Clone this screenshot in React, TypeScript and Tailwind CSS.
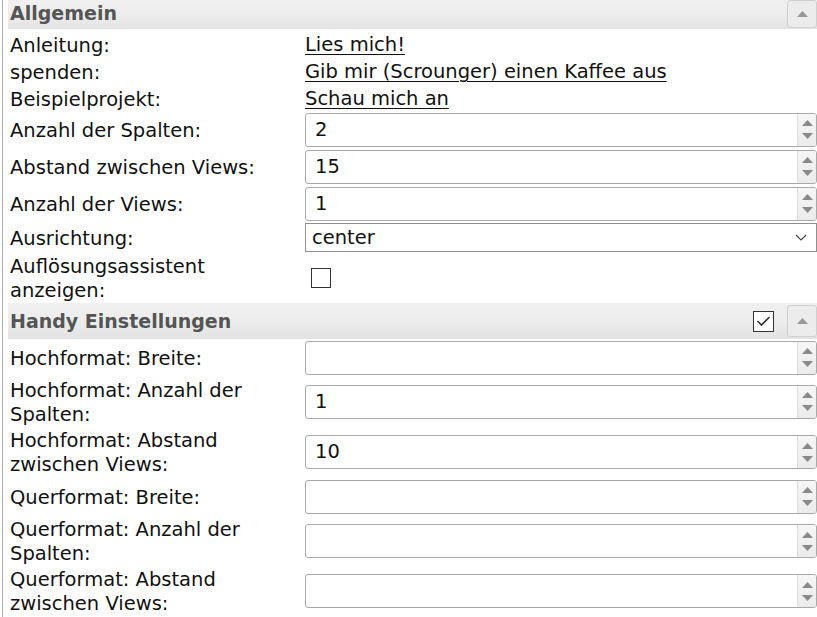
import React from "react";

const font = { fontFamily: '"DejaVu Sans", Verdana, sans-serif' };

function Header({ title, checked, h }: { title: string; checked?: boolean; h: string }) {
  return (
    <div className={`flex items-center bg-[linear-gradient(#f0f0f0_0%,#ededed_45%,#e3e3e3_100%)] pl-[2px] ${h}`}>
      <span className={`flex-1 text-[19px] font-bold text-[#555] ${checked ? "" : "pb-[3px]"}`}>{title}</span>
      {checked && (
        <span className="mr-[13px] flex h-[21px] w-[21px] items-center justify-center border border-[#333] bg-white">
          <svg width="15" height="12" viewBox="0 0 15 12">
            <path d="M1.5 6 L5.5 10 L13.5 2" fill="none" stroke="#333" strokeWidth="1.6" />
          </svg>
        </span>
      )}
      <span
        className={`flex w-[30px] items-center justify-center self-start rounded-[3px] border border-[#d0d0d0] bg-[#ececec] ${
          checked ? "mt-[2px] h-[32px]" : "h-[28px]"
        }`}
      >
        <svg width="11" height="6" viewBox="0 0 11 6">
          <path d="M0 6 L5.5 0 L11 6 Z" fill="#999" />
        </svg>
      </span>
    </div>
  );
}

function Spin({ value }: { value?: string }) {
  return (
    <div className="flex h-[34px] w-full overflow-hidden rounded-[3px] border border-[#a9a9a9] bg-white">
      <div className="flex flex-1 items-center pl-[9px] text-[19.5px] text-[#111]">{value}</div>
      <div className="flex w-[19px] flex-col items-center justify-center gap-[7px] border-l border-[#ddd] bg-[linear-gradient(#f6f6f6,#ebebeb)]">
        <svg width="11" height="6" viewBox="0 0 11 6">
          <path d="M0 6 L5.5 0 L11 6 Z" fill="#8a8a8a" />
        </svg>
        <svg width="11" height="6" viewBox="0 0 11 6">
          <path d="M0 0 L5.5 6 L11 0 Z" fill="#8a8a8a" />
        </svg>
      </div>
    </div>
  );
}

function Row({ label, children, h }: { label: React.ReactNode; children?: React.ReactNode; h: string }) {
  return (
    <div className={`grid grid-cols-[297px_1fr] items-center ${h}`}>
      <div className="pl-[2px] pr-2 pt-[2px] text-[19.5px] leading-[24px] text-[#111]">{label}</div>
      <div className="flex items-center">{children}</div>
    </div>
  );
}

function Link({ children }: { children: React.ReactNode }) {
  return <a className="text-[19.5px] text-[#111] underline decoration-1 underline-offset-[3px]">{children}</a>;
}

export default function App() {
  return (
    <div className="h-[617px] w-[817px] overflow-hidden bg-white pl-[2px]" style={font}>
      <div className="h-full border-l border-[#b0b0b0] pl-[5px]">
        <Header title="Allgemein" h="h-[29px]" />
        <div className="h-[1px]" />
        <Row label="Anleitung:" h="h-[27px]">
          <Link>Lies mich!</Link>
        </Row>
        <Row label="spenden:" h="h-[27px]">
          <Link>Gib mir (Scrounger) einen Kaffee aus</Link>
        </Row>
        <Row label="Beispielprojekt:" h="h-[27px]">
          <Link>Schau mich an</Link>
        </Row>
        <Row label="Anzahl der Spalten:" h="h-[37px]">
          <Spin value="2" />
        </Row>
        <Row label="Abstand zwischen Views:" h="h-[37px]">
          <Spin value="15" />
        </Row>
        <Row label="Anzahl der Views:" h="h-[37px]">
          <Spin value="1" />
        </Row>
        <Row label="Ausrichtung:" h="h-[31px]">
          <div className="flex h-[29px] w-full items-center justify-between border border-[#8f8f8f] bg-white pl-[6px] pr-[9px] text-[19.5px] text-[#111]">
            <span>center</span>
            <svg width="12" height="7" viewBox="0 0 12 7">
              <path d="M1 1 L6 6 L11 1" fill="none" stroke="#444" strokeWidth="1.1" />
            </svg>
          </div>
        </Row>
        <Row label={<>Auflösungsassistent<br />anzeigen:</>} h="h-[50px]">
          <span className="ml-[6px] h-[20px] w-[20px] border border-[#333] bg-white" />
        </Row>
        <Header title="Handy Einstellungen" checked h="h-[36px]" />
        <Row label="Hochformat: Breite:" h="h-[37px]">
          <Spin />
        </Row>
        <Row label={<>Hochformat: Anzahl der<br />Spalten:</>} h="h-[51px]">
          <Spin value="1" />
        </Row>
        <Row label={<>Hochformat: Abstand<br />zwischen Views:</>} h="h-[50px]">
          <Spin value="10" />
        </Row>
        <Row label="Querformat: Breite:" h="h-[39px]">
          <Spin />
        </Row>
        <Row label={<>Querformat: Anzahl der<br />Spalten:</>} h="h-[49px]">
          <Spin />
        </Row>
        <Row label={<>Querformat: Abstand<br />zwischen Views:</>} h="h-[52px]">
          <Spin />
        </Row>
      </div>
    </div>
  );
}
